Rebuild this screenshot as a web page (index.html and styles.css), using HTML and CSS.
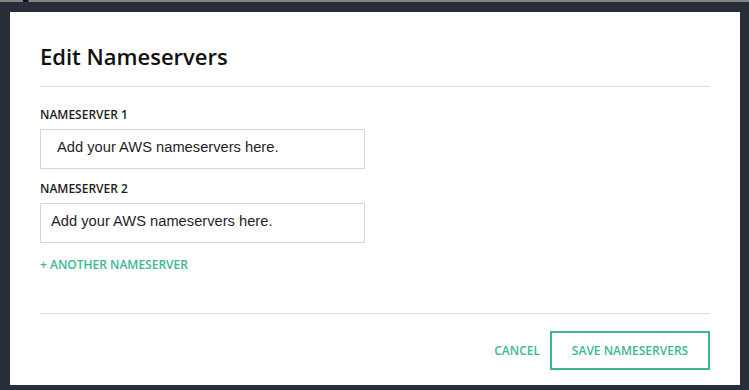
FILE: index.html
```html
<!DOCTYPE html>
<html lang="en">

<head>
  <meta charset="UTF-8">
  <title>Edit Nameservers</title>
  <link rel="stylesheet" href="styles.css">
</head>

<body>
  <div class="top-strip">
    <span class="strip-mark"></span>
    <span class="strip-dot"></span>
  </div>

  <div class="modal">
    <div class="modal-header">
      <h2 class="modal-title">Edit Nameservers</h2>
    </div>

    <div class="modal-body">
      <label class="field-label" for="ns1">NAMESERVER 1</label>
      <input class="field-input field-input--wide" type="text" id="ns1" name="ns1" value="Add your AWS nameservers here.">
      <label class="field-label" for="ns2">NAMESERVER 2</label>
      <input class="field-input" type="text" id="ns2" name="ns2" value="Add your AWS nameservers here.">
      <a class="add-link" href="#">+ ANOTHER NAMESERVER</a>
    </div>

    <div class="modal-footer">
      <button class="btn-cancel">CANCEL</button>
      <button class="btn-save">SAVE NAMESERVERS</button>
    </div>
  </div>
</body>

</html>
```

FILE: styles.css
```css
body {
  margin: 0;
  background-color: #272e38;
  font-family: "Open Sans", "Liberation Sans", sans-serif;
}

.top-strip {
  display: flex;
  height: 2px;
  background-color: #858585;
  padding-left: 23px;
}

.strip-mark {
  width: 5px;
  background-color: #111;
}

.strip-dot {
  width: 1px;
  background-color: #2a5c8c;
}

.modal {
  margin: 10px 9px 0 10px;
  height: 373px;
  box-sizing: border-box;
  background-color: #fff;
  padding: 28px 30px 16px 30px;
  display: flex;
  flex-direction: column;
}

.modal-header {
  padding-bottom: 14px;
  border-bottom: 1px solid #dadada;
}

.modal-title {
  margin: 0;
  font-size: 22px;
  line-height: 32px;
  font-weight: 600;
  color: #111;
}

.modal-body {
  display: flex;
  flex-direction: column;
  align-items: flex-start;
  padding-top: 20px;
  padding-bottom: 40px;
  border-bottom: 1px solid #dadada;
}

.field-label {
  display: block;
  font-size: 12px;
  line-height: 16px;
  font-weight: 600;
  color: #1d1d1d;
  margin-bottom: 6px;
}

.field-input {
  width: 325px;
  height: 40px;
  box-sizing: border-box;
  border: 1px solid #d6d6d6;
  padding: 0 10px 5px 10px;
  margin: 0 0 12px 0;
  font-family: "Liberation Sans", Arial, sans-serif;
  font-size: 14.7px;
  color: #1f1f1f;
  outline: none;
}

.field-input--wide {
  padding-left: 16px;
}

.add-link {
  margin-top: 2px;
  font-size: 12px;
  line-height: 16px;
  font-weight: 600;
  color: #3cb795;
  text-decoration: none;
}

.modal-footer {
  display: flex;
  justify-content: flex-end;
  align-items: center;
  padding-top: 17px;
}

.btn-cancel {
  background: none;
  border: none;
  padding: 0 10px;
  font-family: inherit;
  font-size: 12px;
  font-weight: 600;
  color: #3cb795;
  cursor: pointer;
}

.btn-save {
  width: 160px;
  height: 39px;
  box-sizing: border-box;
  background: #fff;
  border: 2px solid #3cb795;
  font-family: inherit;
  font-size: 12px;
  font-weight: 600;
  color: #3cb795;
  cursor: pointer;
}
```
